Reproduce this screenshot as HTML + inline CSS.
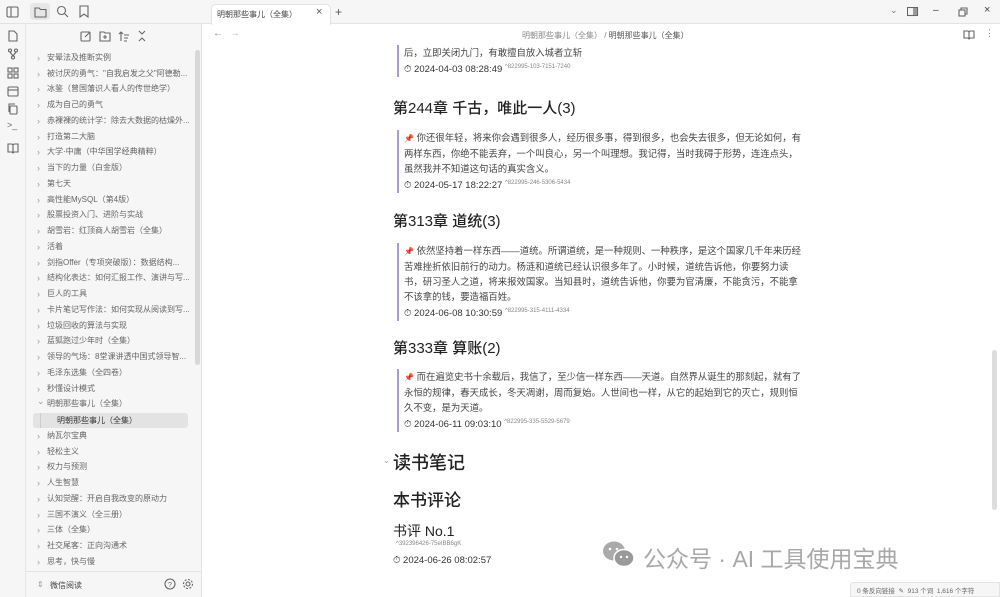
<!DOCTYPE html>
<html><head><meta charset="utf-8">
<style>
*{margin:0;padding:0;box-sizing:border-box}
body{width:1000px;height:597px;overflow:hidden;background:#fff;font-family:"Liberation Sans","Noto Sans CJK SC",sans-serif;color:#222;position:relative}
.abs{position:absolute}
#ribbon{left:0;top:0;width:26px;height:597px;background:#f6f6f6;border-right:1px solid #e6e6e6}
#side{left:26px;top:0;width:176px;height:597px;background:#f6f6f6;border-right:1px solid #e3e3e3}
#top{left:0;top:0;width:202px;height:24px;border-bottom:1px solid #e3e3e3;background:#f6f6f6}
.ti{position:absolute;left:47px;font-size:8px;color:#666;white-space:nowrap;line-height:10px}
.ti::before{content:"›";position:absolute;left:-10px;color:#999;font-size:9px}
.ti.open::before{content:"⌄";top:-3px}
.ic{position:absolute;stroke:#666;fill:none;stroke-width:1.1}
.q{position:absolute;left:397px;border-left:2px solid #a895ee;padding-left:5px;font-size:9.4px;line-height:15px;color:#444;width:405px}
.ts{font-size:9.5px;color:#333}
.ts small{font-size:6px;color:#888;vertical-align:4px}
.h{position:absolute;left:393px;font-size:15px;font-weight:500;color:#222;white-space:nowrap}
.pin{color:#d33;font-size:8px}
</style></head><body>
<div id="ribbon" class="abs"></div>
<div id="side" class="abs"></div>
<div id="top" class="abs"></div>
<svg class="ic" style="left:6px;top:6px" width="13" height="12"><rect x="1" y="1" width="11" height="10" rx="1.5"/><line x1="5" y1="1" x2="5" y2="11"/></svg>
<div class="abs" style="left:30px;top:3px;width:20px;height:17px;background:#e6e6e6;border-radius:4px"></div>
<svg class="ic" style="left:34px;top:6px" width="13" height="12"><path d="M1 2h4l1.5 1.5H12v7.5H1z"/></svg>
<svg class="ic" style="left:56px;top:5px" width="13" height="13"><circle cx="5.5" cy="5.5" r="4"/><line x1="8.5" y1="8.5" x2="12" y2="12"/></svg>
<svg class="ic" style="left:79px;top:5px" width="10" height="13"><path d="M1 1h8v11l-4-3-4 3z"/></svg>
<svg class="ic" style="left:7px;top:30px" width="12" height="12"><path d="M2 1h5l3 3v7H2z"/></svg>
<svg class="ic" style="left:7px;top:48px" width="12" height="12"><circle cx="3" cy="2.5" r="1.5"/><circle cx="9" cy="2.5" r="1.5"/><circle cx="6" cy="9.5" r="1.5"/><path d="M3 4l3 4M9 4l-3 4"/></svg>
<svg class="ic" style="left:7px;top:67px" width="12" height="12"><rect x="1" y="1" width="4" height="4"/><rect x="7" y="1" width="4" height="4"/><rect x="1" y="7" width="4" height="4"/><rect x="7" y="7" width="4" height="4"/></svg>
<svg class="ic" style="left:7px;top:85px" width="12" height="12"><rect x="1" y="2" width="10" height="9" rx="1"/><line x1="1" y1="5" x2="11" y2="5"/></svg>
<svg class="ic" style="left:7px;top:103px" width="12" height="12"><rect x="3" y="3" width="7" height="8" rx="1"/><path d="M2 9V1h6"/></svg>
<div class="abs" style="left:7px;top:120px;font-size:9px;color:#666">&gt;_</div>
<svg class="ic" style="left:7px;top:142px" width="12" height="12"><path d="M1 2h4l1 1 1-1h4v8H7l-1 1-1-1H1zM6 3v8"/></svg>
<svg class="ic" style="left:80px;top:30px" width="12" height="12"><rect x="1" y="2" width="9" height="9" rx="1"/><path d="M5 7l5-5"/></svg>
<svg class="ic" style="left:99px;top:30px" width="12" height="12"><path d="M1 2h4l1 1h5v8H1z"/><path d="M6 5v4M4 7h4"/></svg>
<svg class="ic" style="left:118px;top:30px" width="12" height="12"><path d="M3 11V2M1 4l2-2 2 2M6 5h5M6 8h4M6 11h3"/></svg>
<svg class="ic" style="left:137px;top:30px" width="10" height="12"><path d="M2 1l3 3 3-3M2 11l3-3 3 3"/></svg>
<div class="ti" style="top:53px">安晕法及推断实例</div>
<div class="ti" style="top:69px">被讨厌的勇气："自我启发之父"阿德勒...</div>
<div class="ti" style="top:84px">冰鉴（曾国藩识人看人的传世绝学）</div>
<div class="ti" style="top:100px">成为自己的勇气</div>
<div class="ti" style="top:116px">赤裸裸的统计学：除去大数据的枯燥外...</div>
<div class="ti" style="top:132px">打造第二大脑</div>
<div class="ti" style="top:147px">大学·中庸（中华国学经典精粹）</div>
<div class="ti" style="top:163px">当下的力量（白金版）</div>
<div class="ti" style="top:179px">第七天</div>
<div class="ti" style="top:195px">高性能MySQL（第4版）</div>
<div class="ti" style="top:210px">股票投资入门、进阶与实战</div>
<div class="ti" style="top:226px">胡雪岩：红顶商人胡雪岩（全集）</div>
<div class="ti" style="top:242px">活着</div>
<div class="ti" style="top:258px">剑指Offer（专项突破版）：数据结构...</div>
<div class="ti" style="top:273px">结构化表达：如何汇报工作、演讲与写...</div>
<div class="ti" style="top:289px">巨人的工具</div>
<div class="ti" style="top:305px">卡片笔记写作法：如何实现从阅读到写...</div>
<div class="ti" style="top:321px">垃圾回收的算法与实现</div>
<div class="ti" style="top:336px">蓝狐跑过少年时（全集）</div>
<div class="ti" style="top:352px">领导的气场：8堂课讲透中国式领导智...</div>
<div class="ti" style="top:368px">毛泽东选集（全四卷）</div>
<div class="ti" style="top:384px">秒懂设计模式</div>
<div class="ti open" style="top:399px">明朝那些事儿（全集）</div>
<div class="abs" style="left:33px;top:413px;width:155px;height:15px;background:#e3e3e3;border-radius:3px"></div>
<div class="abs" style="left:40px;top:413px;width:1px;height:15px;background:#ccc"></div>
<div class="abs" style="left:57px;top:415px;font-size:8px;color:#333">明朝那些事儿（全集）</div>
<div class="ti" style="top:431px">纳瓦尔宝典</div>
<div class="ti" style="top:447px">轻松主义</div>
<div class="ti" style="top:462px">权力与预测</div>
<div class="ti" style="top:478px">人生智慧</div>
<div class="ti" style="top:494px">认知觉醒：开启自我改变的原动力</div>
<div class="ti" style="top:510px">三国不演义（全三册）</div>
<div class="ti" style="top:525px">三体（全集）</div>
<div class="ti" style="top:541px">社交尾客：正向沟通术</div>
<div class="ti" style="top:557px">思考，快与慢</div>
<div class="abs" style="left:195px;top:50px;width:5px;height:315px;background:#d8d8d8;border-radius:3px"></div>
<div class="abs" style="left:26px;top:571px;width:176px;height:1px;background:#e3e3e3"></div>
<div class="abs" style="left:37px;top:580px;font-size:8px;color:#999">⇕</div>
<div class="abs" style="left:50px;top:580px;font-size:8px;color:#444">微信阅读</div>
<svg class="ic" style="left:164px;top:578px" width="12" height="12"><circle cx="6" cy="6" r="5"/><text x="6" y="9" font-size="7" text-anchor="middle" fill="#666" stroke="none">?</text></svg>
<svg class="ic" style="left:182px;top:578px" width="12" height="12"><circle cx="6" cy="6" r="2"/><circle cx="6" cy="6" r="4.5" stroke-dasharray="2 1.5"/></svg>
<div class="abs" style="left:202px;top:0;width:798px;height:24px;background:#f6f6f6;border-bottom:1px solid #e3e3e3"></div>
<div class="abs" style="left:211px;top:4px;width:120px;height:21px;background:#fff;border:1px solid #e3e3e3;border-bottom:none;border-radius:5px 5px 0 0"></div>
<div class="abs" style="left:217px;top:9px;font-size:8px;color:#444">明朝那些事儿（全集）</div>
<div class="abs" style="left:316px;top:6px;font-size:11px;color:#555">×</div>
<div class="abs" style="left:335px;top:5px;font-size:12px;color:#555">+</div>
<div class="abs" style="left:890px;top:5px;font-size:9px;color:#777">⌄</div>
<svg class="ic" style="left:907px;top:7px" width="12" height="10"><rect x="0.5" y="0.5" width="10" height="8"/><rect x="6" y="1" width="4" height="7" fill="#999" stroke="none"/></svg>
<div class="abs" style="left:933px;top:5px;font-size:10px;color:#444">–</div>
<svg class="ic" style="left:958px;top:7px" width="10" height="10"><rect x="1" y="3" width="6" height="6"/><path d="M3 3V1h6v6H7"/></svg>
<div class="abs" style="left:984px;top:4px;font-size:11px;color:#444">×</div>
<div class="abs" style="left:213px;top:28px;font-size:10px;color:#888">←</div>
<div class="abs" style="left:230px;top:28px;font-size:10px;color:#bbb">→</div>
<div class="abs" style="left:522px;top:30px;font-size:8px;color:#888">明朝那些事儿（全集） / <span style="color:#555">明朝那些事儿（全集）</span></div>
<svg class="ic" style="left:963px;top:30px" width="12" height="10"><path d="M1 1h4l1 1 1-1h4v7H7l-1 1-1-1H1zM6 2v7"/></svg>
<div class="abs" style="left:985px;top:28px;font-size:9px;color:#777">⋮</div>
<div class="q" style="top:45px">后，立即关闭九门，有敢擅自放入城者立斩<br><span class="ts">⏱ 2024-04-03 08:28:49 <small>^822995-103-7151-7240</small></span></div>
<div class="h" style="top:97px">第244章 千古，唯此一人(3)</div>
<div class="q" style="top:130px"><span class="pin">📌</span> 你还很年轻，将来你会遇到很多人，经历很多事，得到很多，也会失去很多，但无论如何，有两样东西，你绝不能丢弃，一个叫良心，另一个叫理想。我记得，当时我碍于形势，连连点头，虽然我并不知道这句话的真实含义。<br><span class="ts">⏱ 2024-05-17 18:22:27 <small>^822995-246-5306-5434</small></span></div>
<div class="h" style="top:210px">第313章 道统(3)</div>
<div class="q" style="top:243px"><span class="pin">📌</span> 依然坚持着一样东西——道统。所谓道统，是一种规则、一种秩序，是这个国家几千年来历经苦难挫折依旧前行的动力。杨涟和道统已经认识很多年了。小时候，道统告诉他，你要努力读书，研习圣人之道，将来报效国家。当知县时，道统告诉他，你要为官清廉，不能贪污，不能拿不该拿的钱，要造福百姓。<br><span class="ts">⏱ 2024-06-08 10:30:59 <small>^822995-315-4111-4334</small></span></div>
<div class="h" style="top:337px">第333章 算账(2)</div>
<div class="q" style="top:369px"><span class="pin">📌</span> 而在遍览史书十余载后，我信了，至少信一样东西——天道。自然界从诞生的那刻起，就有了永恒的规律，春天成长，冬天凋谢，周而复始。人世间也一样，从它的起始到它的灭亡，规则恒久不变，是为天道。<br><span class="ts">⏱ 2024-06-11 09:03:10 <small>^822995-335-5529-5679</small></span></div>
<div class="abs" style="left:383px;top:456px;font-size:8px;color:#999">⌄</div>
<div class="h" style="top:449px;font-size:18px">读书笔记</div>
<div class="h" style="top:486px;font-size:17px">本书评论</div>
<div class="h" style="top:521px;font-size:14px;font-weight:normal">书评 No.1</div>
<div class="abs" style="left:396px;top:541px;font-size:6px;color:#888">^392396426-75eIBB6gK</div>
<div class="abs" style="left:393px;top:555px;font-size:9.5px;color:#333">⏱ 2024-06-26 08:02:57</div>
<svg class="abs" style="left:602px;top:540px" width="34" height="28"><ellipse cx="12" cy="11" rx="11" ry="9.5" fill="#aaa"/><ellipse cx="22" cy="18" rx="10" ry="8.5" fill="#9a9a9a" stroke="#fff" stroke-width="1.5"/><circle cx="8" cy="9" r="1.3" fill="#fff"/><circle cx="15" cy="9" r="1.3" fill="#fff"/><circle cx="19" cy="17" r="1.2" fill="#fff"/><circle cx="25" cy="17" r="1.2" fill="#fff"/></svg>
<div class="abs" style="left:643px;top:540px;font-size:23px;color:#a8a8a8;white-space:nowrap">公众号 · AI 工具使用宝典</div>
<div class="abs" style="left:992px;top:350px;width:5px;height:160px;background:#ddd;border-radius:3px"></div>
<div class="abs" style="left:850px;top:582px;width:150px;height:15px;background:#f6f6f6;border:1px solid #e3e3e3;border-radius:4px 0 0 0"></div>
<div class="abs" style="left:857px;top:585px;font-size:6.5px;color:#666;white-space:nowrap">0 条反向链接 &nbsp;✎ &nbsp;913 个词 &nbsp;1,616 个字符</div>
</body></html>
